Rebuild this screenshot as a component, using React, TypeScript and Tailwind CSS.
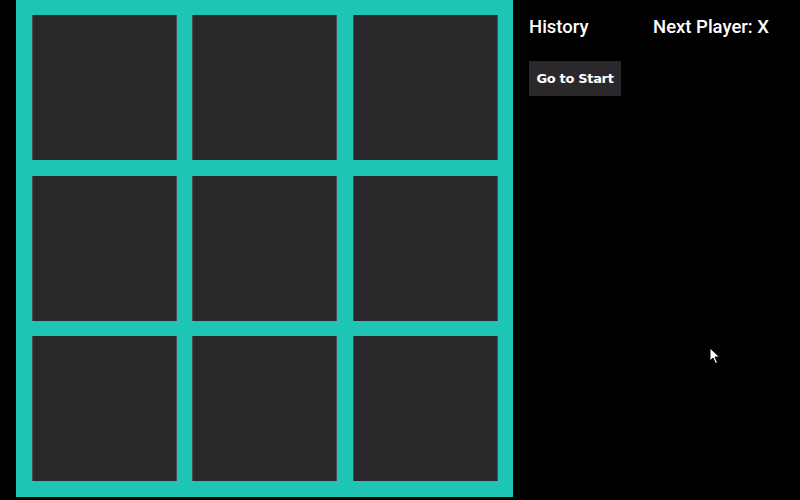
const cells = [0, 1, 2, 3, 4, 5, 6, 7, 8];

export default function App() {
  return (
    <div className="relative w-[800px] h-[500px] bg-black overflow-hidden flex font-['Roboto',sans-serif] text-white">
      <div className="ml-4 -mt-px w-[497px] h-[498px] bg-[#1ec5b6] px-4 pt-4 pb-[17px] grid grid-cols-3 gap-x-4 gap-y-[15.5px]">
        {cells.map((i) => (
          <button
            key={i}
            className="w-[145px] h-[145px] bg-[#2a282a] border-x border-[#4e4c4e]"
          />
        ))}
      </div>
      <div className="ml-4 pt-[14px]">
        <div className="flex">
          <h2 className="w-[124px] text-[18.5px] font-medium leading-[27px]">History</h2>
          <h2 className="text-[18.5px] font-medium leading-[27px]">Next Player: X</h2>
        </div>
        <button className="mt-5 w-[92px] h-[35px] bg-[#2a282a] text-[13px] font-bold font-['DejaVu_Sans',sans-serif] tracking-tight">
          Go to Start
        </button>
      </div>
      <svg
        className="absolute left-[709px] top-[347px]"
        width="12"
        height="18"
        viewBox="0 0 12 18"
      >
        <path d="M1 1 L1 14 L4 11 L6.5 16.5 L8.5 15.5 L6 10 L10.5 10 Z" fill="white" stroke="black" strokeWidth="1" />
      </svg>
    </div>
  );
}
